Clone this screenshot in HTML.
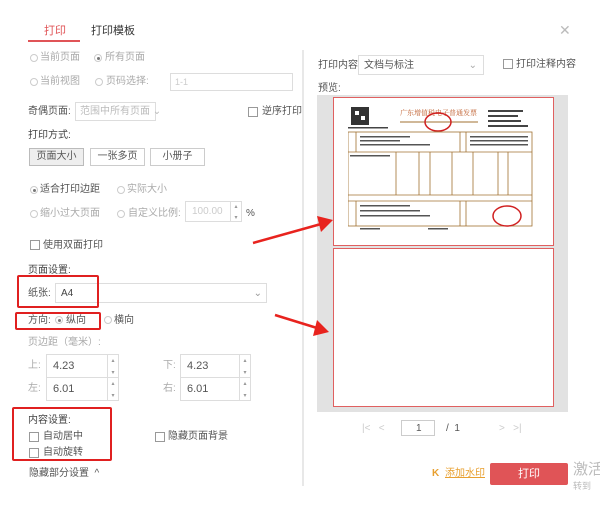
<!DOCTYPE html>
<html><head><meta charset="utf-8"><style>
*{margin:0;padding:0;box-sizing:border-box}
body{width:600px;height:515px;background:#fff;font-family:"Liberation Sans","Noto Sans CJK SC",sans-serif;font-size:10px;color:#555;position:relative;overflow:hidden}
.a{position:absolute;white-space:nowrap;line-height:13px}
.g{color:#aaa}
.r{position:absolute;width:8px;height:8px;border:1px solid #ccc;border-radius:50%}
.r.on::after{content:"";position:absolute;left:1.5px;top:1.5px;width:3px;height:3px;border-radius:50%;background:#777}
.c{position:absolute;width:10px;height:10px;border:1px solid #999;background:#fff}
.in{position:absolute;border:1px solid #ddd;background:#fff}
.btn{position:absolute;border:1px solid #ccc;text-align:center;line-height:16px;font-size:10px;color:#555}
.red{position:absolute;border:2px solid #e02020;border-radius:2px}
.sp{position:absolute;right:0;top:0;bottom:0;width:11px;border-left:1px solid #ddd;font-size:6px;color:#999;text-align:center;line-height:11px}
</style></head><body>
<div class="a" style="left:44px;top:25px;font-size:11px;color:#e05457">打印</div>
<div class="a" style="left:28px;top:40px;width:52px;height:2px;background:#e05457"></div>
<div class="a" style="left:91px;top:25px;font-size:11px;color:#333">打印模板</div>
<div class="a" style="left:302px;top:50px;width:2px;height:436px;background:#e8e8e8"></div>

<div class="r" style="left:30px;top:54px"></div><div class="a g" style="left:40px;top:51px">当前页面</div>
<div class="r on" style="left:94px;top:54px"></div><div class="a g" style="left:105px;top:51px">所有页面</div>
<div class="r" style="left:30px;top:78px"></div><div class="a g" style="left:40px;top:75px">当前视图</div>
<div class="r" style="left:95px;top:78px"></div><div class="a g" style="left:106px;top:75px">页码选择:</div>
<div class="in" style="left:170px;top:73px;width:123px;height:18px"><span class="a" style="left:4px;top:2px;color:#ccc;font-size:9px">1-1</span></div>

<div class="a" style="left:28px;top:105px">奇偶页面:</div>
<div class="in" style="left:75px;top:102px;width:81px;height:19px"><span class="a" style="left:4px;top:2px;color:#bbb">范围中所有页面 ⌄</span></div>
<div class="c" style="left:248px;top:107px"></div><div class="a" style="left:262px;top:105px">逆序打印</div>
<div class="a" style="left:28px;top:129px;color:#444">打印方式:</div>
<div class="btn" style="left:29px;top:148px;width:55px;height:18px;background:#eee;border-color:#bbb">页面大小</div>
<div class="btn" style="left:90px;top:148px;width:55px;height:18px">一张多页</div>
<div class="btn" style="left:150px;top:148px;width:55px;height:18px">小册子</div>

<div class="r on" style="left:30px;top:186px"></div><div class="a" style="left:40px;top:183px">适合打印边距</div>
<div class="r" style="left:117px;top:186px"></div><div class="a g" style="left:127px;top:183px">实际大小</div>
<div class="r" style="left:30px;top:210px"></div><div class="a g" style="left:40px;top:207px">缩小过大页面</div>
<div class="r" style="left:117px;top:210px"></div><div class="a g" style="left:128px;top:207px">自定义比例:</div>
<div class="in" style="left:185px;top:201px;width:57px;height:21px"><span class="a" style="left:6px;top:3px;color:#ccc">100.00</span><div class="sp">▴<br>▾</div></div>
<div class="a" style="left:246px;top:207px">%</div>
<div class="c" style="left:30px;top:240px"></div><div class="a" style="left:43px;top:239px">使用双面打印</div>

<div class="a" style="left:28px;top:264px;color:#444">页面设置:</div>
<div class="in" style="left:55px;top:283px;width:212px;height:20px"><span class="a" style="left:5px;top:3px;color:#444">A4</span><span class="a" style="right:4px;top:3px;color:#999">⌄</span></div>
<div class="a" style="left:28px;top:287px">纸张:</div>
<div class="red" style="left:17px;top:275px;width:82px;height:33px"></div>
<div class="a" style="left:28px;top:314px">方向:</div>
<div class="r on" style="left:55px;top:316px"></div><div class="a" style="left:66px;top:314px">纵向</div>
<div class="r" style="left:104px;top:316px"></div><div class="a" style="left:114px;top:314px">横向</div>
<div class="red" style="left:15px;top:312px;width:86px;height:18px"></div>
<div class="a g" style="left:28px;top:336px">页边距（毫米）:</div>

<div class="a g" style="left:28px;top:359px">上:</div>
<div class="in" style="left:46px;top:354px;width:73px;height:24px"><span class="a" style="left:6px;top:5px;font-size:11px;color:#555">4.23</span><div class="sp" style="line-height:12px">▴<br>▾</div></div>
<div class="a g" style="left:163px;top:359px">下:</div>
<div class="in" style="left:180px;top:354px;width:71px;height:24px"><span class="a" style="left:6px;top:5px;font-size:11px;color:#555">4.23</span><div class="sp" style="line-height:12px">▴<br>▾</div></div>
<div class="a g" style="left:28px;top:382px">左:</div>
<div class="in" style="left:46px;top:377px;width:73px;height:24px"><span class="a" style="left:6px;top:5px;font-size:11px;color:#555">6.01</span><div class="sp" style="line-height:12px">▴<br>▾</div></div>
<div class="a g" style="left:163px;top:382px">右:</div>
<div class="in" style="left:180px;top:377px;width:71px;height:24px"><span class="a" style="left:6px;top:5px;font-size:11px;color:#555">6.01</span><div class="sp" style="line-height:12px">▴<br>▾</div></div>

<div class="red" style="left:12px;top:407px;width:100px;height:54px"></div>
<div class="a" style="left:28px;top:414px;color:#444">内容设置:</div>
<div class="c" style="left:29px;top:432px"></div><div class="a" style="left:43px;top:430px">自动居中</div>
<div class="c" style="left:29px;top:448px"></div><div class="a" style="left:43px;top:446px">自动旋转</div>
<div class="c" style="left:155px;top:432px"></div><div class="a" style="left:168px;top:430px">隐藏页面背景</div>
<div class="a" style="left:29px;top:467px">隐藏部分设置 &nbsp;^</div>

<!-- right -->
<div class="a" style="left:559px;top:22px;font-size:14px;color:#bbb;line-height:16px">✕</div>
<div class="a" style="left:318px;top:59px">打印内容:</div>
<div class="in" style="left:358px;top:55px;width:126px;height:20px"><span class="a" style="left:5px;top:3px;color:#555">文档与标注</span><span class="a" style="right:6px;top:3px;color:#aaa">⌄</span></div>
<div class="c" style="left:503px;top:59px"></div><div class="a" style="left:516px;top:58px">打印注释内容</div>
<div class="a" style="left:318px;top:82px">预览:</div>
<div class="a" style="left:317px;top:95px;width:251px;height:317px;background:#e2e2e2"></div>
<div class="a" style="left:333px;top:97px;width:221px;height:149px;background:#fff;border:1px solid #e06060"></div>
<div class="a" style="left:333px;top:248px;width:221px;height:159px;background:#fff;border:1px solid #e06060"></div>
<svg class="a" style="left:348px;top:105px" width="190" height="132" viewBox="0 0 190 132">
<rect x="3" y="2" width="18" height="18" fill="#333"/><rect x="7" y="6" width="4" height="4" fill="#fff"/><rect x="13" y="11" width="4" height="4" fill="#fff"/>
<text x="52" y="10" font-size="7" fill="#c06030" font-family="Noto Serif CJK SC,serif">广东增值税电子普通发票</text>
<line x1="52" y1="17" x2="130" y2="17" stroke="#a07030"/>
<ellipse cx="90" cy="17" rx="13" ry="9" fill="none" stroke="#d02020" stroke-width="1.5"/>
<g fill="#444"><rect x="140" y="5" width="35" height="2"/><rect x="140" y="10" width="30" height="2"/><rect x="140" y="15" width="33" height="2"/><rect x="140" y="20" width="40" height="2"/><rect x="0" y="22" width="40" height="1.5"/></g>
<rect x="0" y="27" width="184" height="94" fill="none" stroke="#a07030" stroke-width="0.8"/>
<g stroke="#a07030" fill="none" stroke-width="0.8">
<line x1="0" y1="47" x2="184" y2="47"/><line x1="0" y1="90" x2="184" y2="90"/><line x1="0" y1="96" x2="184" y2="96"/>
<line x1="8" y1="27" x2="8" y2="47"/><line x1="112" y1="27" x2="112" y2="47"/><line x1="118" y1="27" x2="118" y2="47"/><line x1="48" y1="47" x2="48" y2="90"/><line x1="71" y1="47" x2="71" y2="90"/><line x1="82" y1="47" x2="82" y2="90"/><line x1="104" y1="47" x2="104" y2="90"/><line x1="125" y1="47" x2="125" y2="90"/><line x1="150" y1="47" x2="150" y2="90"/><line x1="160" y1="47" x2="160" y2="90"/>
<line x1="8" y1="96" x2="8" y2="121"/><line x1="112" y1="96" x2="112" y2="121"/><line x1="118" y1="96" x2="118" y2="121"/>
</g>
<g fill="#555"><rect x="12" y="31" width="50" height="1.5"/><rect x="12" y="35" width="40" height="1.5"/><rect x="12" y="39" width="70" height="1.5"/><rect x="122" y="31" width="58" height="1.5"/><rect x="122" y="35" width="58" height="1.5"/><rect x="122" y="39" width="58" height="1.5"/><rect x="2" y="50" width="40" height="1.5"/><rect x="12" y="100" width="50" height="1.5"/><rect x="12" y="105" width="60" height="1.5"/><rect x="12" y="110" width="70" height="1.5"/><rect x="12" y="123" width="20" height="1.5"/><rect x="80" y="123" width="20" height="1.5"/></g>
<ellipse cx="159" cy="111" rx="14" ry="10" fill="none" stroke="#d02020" stroke-width="1.5"/>
</svg>
<svg class="a" style="left:245px;top:210px" width="90" height="130"><g fill="#e8231e" stroke="#e8231e" stroke-width="2.5">
<line x1="8" y1="33" x2="76" y2="14"/><polygon points="88,10 72,6 76,22" stroke-width="0"/>
<line x1="30" y1="105" x2="72" y2="118"/><polygon points="84,122 72,110 68,126" stroke-width="0"/></g></svg>

<div class="a" style="left:362px;top:422px;color:#ccc">|&lt; &nbsp; &lt;</div>
<div class="in" style="left:401px;top:420px;width:34px;height:16px;border-color:#ccc"><span class="a" style="left:14px;top:1px;color:#555">1</span></div>
<div class="a" style="left:446px;top:422px;color:#555">/ &nbsp;1</div>
<div class="a" style="left:499px;top:422px;color:#ccc">&gt; &nbsp; &gt;|</div>
<div class="a" style="left:432px;top:467px;color:#e8a030;font-weight:bold">K</div>
<div class="a" style="left:445px;top:467px;color:#e8a030;text-decoration:underline">添加水印</div>
<div class="a" style="left:490px;top:463px;width:78px;height:22px;background:#e05457;border-radius:2px;color:#fff;text-align:center;line-height:22px;font-size:11px">打印</div>
<div class="a" style="left:573px;top:461px;font-size:15px;color:#bbb;line-height:18px">激活</div>
<div class="a" style="left:573px;top:480px;font-size:9px;color:#bbb">转到</div>
</body></html>
